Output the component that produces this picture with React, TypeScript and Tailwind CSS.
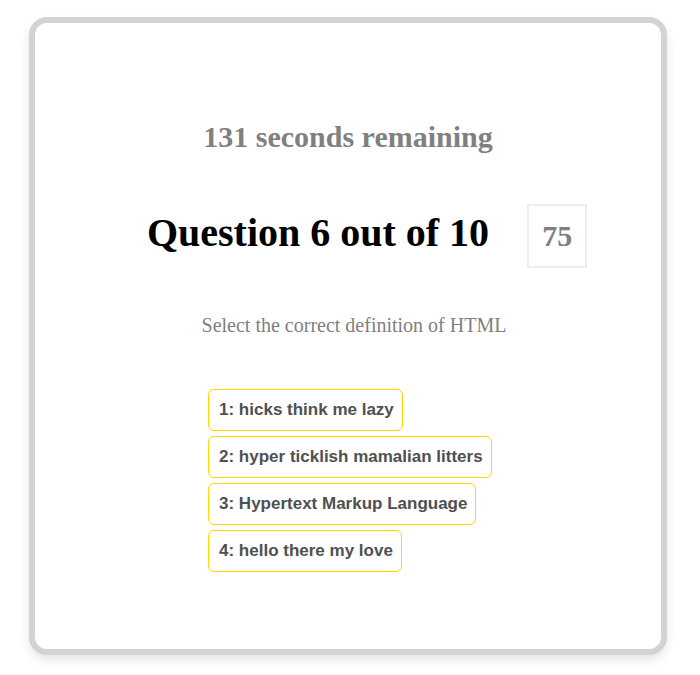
const answers = [
  'hicks think me lazy',
  'hyper ticklish mamalian litters',
  'Hypertext Markup Language',
  'hello there my love',
];

export default function App() {
  return (
    <div className="flow-root bg-white pt-[17px] pr-[33px] pb-5 pl-[29px]">
      <main className="rounded-[18px] border-[6px] border-[#d3d3d3] bg-white px-5 pt-[97px] pb-[77px] font-['Liberation_Serif',serif] text-[#808080] shadow-[0_5px_10px_rgba(0,0,0,0.1)]">
        <h2 className="text-center text-[30px] leading-[34px] font-bold">131 seconds remaining</h2>
        <div className="mt-[50px] flex items-start justify-center gap-[38px] pl-[38px]">
          <h1 className="text-[40px] leading-[58px] font-bold text-black">Question 6 out of 10</h1>
          <div className="border-2 border-[#eeeeee] px-[13px] py-[13px] text-[30px] leading-[34px] font-bold">75</div>
        </div>
        <p className="mt-[45px] pl-3 text-center text-[20px] leading-[24px]">Select the correct definition of HTML</p>
        <div className="mx-auto mt-[52px] flex w-[280px] flex-col items-start gap-[5px]">
          {answers.map((answer, index) => (
            <button
              key={answer}
              type="button"
              className="rounded-[6px] border border-[#ffd700] py-[10px] pr-[8px] pl-[10px] font-['Liberation_Sans',Arial,sans-serif] text-[17px] leading-[20px] font-bold whitespace-nowrap text-[#505050]"
            >
              {index + 1}: {answer}
            </button>
          ))}
        </div>
      </main>
    </div>
  );
}
